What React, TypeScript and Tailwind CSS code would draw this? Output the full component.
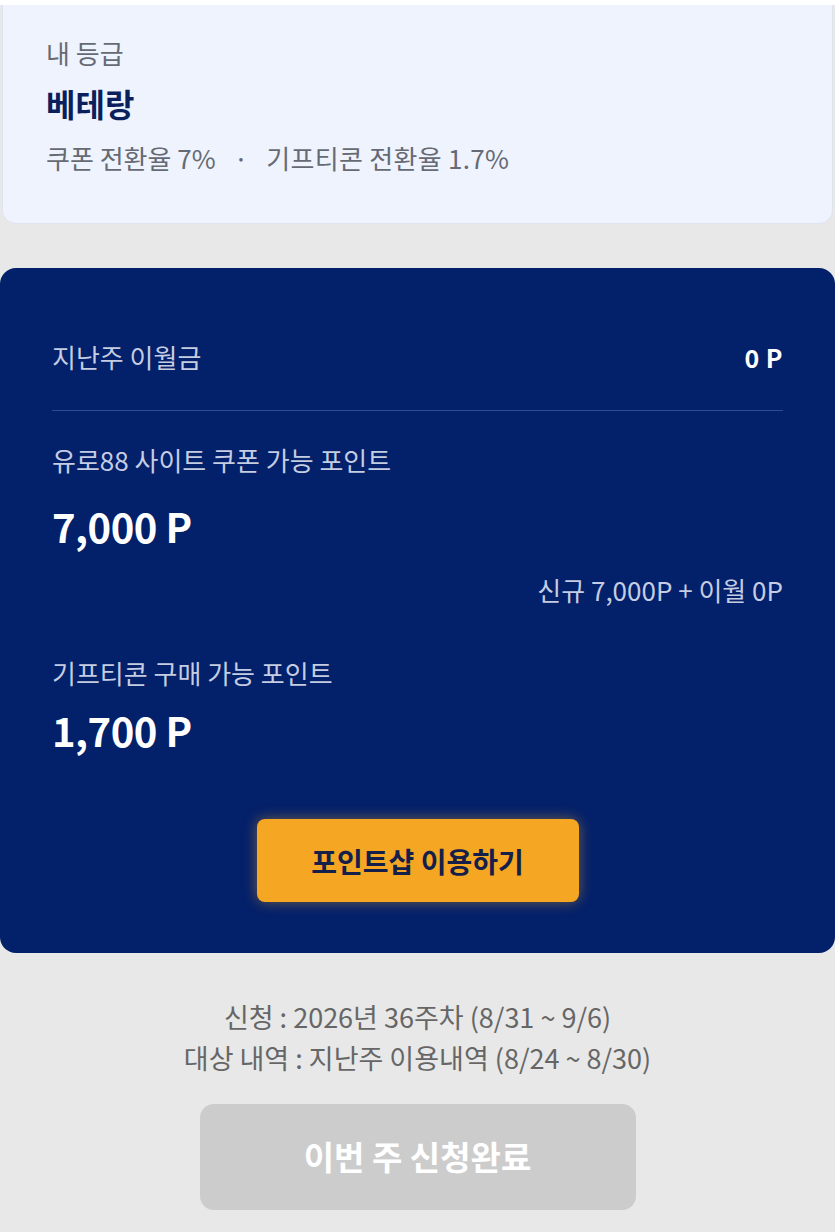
import React from "react";

export default function App() {
  const font = { fontFamily: '"Noto Sans CJK KR", "Noto Sans", sans-serif' };
  return (
    <div className="w-[835px] h-[1232px] bg-[#e8e8e8] overflow-hidden" style={font}>
      <div className="h-[5px] bg-white" />
      <div className="mx-[2px] rounded-b-[14px] bg-[#eef3fe] border border-t-0 border-[#dfe5f0] pl-[43px] pt-[30px] pb-[47px]">
        <div className="text-[26px] leading-[36px] text-[#666a73]">내 등급</div>
        <div className="mt-[14px] text-[32px] leading-[36px] font-bold text-[#0a1f5c]">베테랑</div>
        <div className="mt-[19px] text-[26px] leading-[36px] text-[#666a73] flex">
          <span>쿠폰 전환율 7%</span>
          <span className="mx-[18px]">·</span>
          <span className="tracking-[0.3px]">기프티콘 전환율 1.7%</span>
        </div>
      </div>

      <div className="mt-[44px] rounded-[16px] bg-[#03206a] px-[52px] pt-[71px] pb-[51px]">
        <div className="flex items-center justify-between">
          <span className="text-[26px] leading-[36px] text-[#c5cde3]">지난주 이월금</span>
          <span className="text-[25px] leading-[36px] font-bold text-white tracking-[0.5px]">0 P</span>
        </div>
        <div className="mt-[35px] h-px bg-[#2f4a8f]" />
        <div className="mt-[31px] text-[26px] leading-[36px] text-[#c5cde3]">유로88 사이트 쿠폰 가능 포인트</div>
        <div className="mt-[26px] text-[40px] leading-[44px] font-bold text-white tracking-[-0.5px]">7,000 P</div>
        <div className="mt-[26px] text-right text-[26px] leading-[32px] text-[#c5cde3]">신규 7,000P + 이월 0P</div>
        <div className="mt-[49px] text-[26px] leading-[36px] text-[#c5cde3]">기프티콘 구매 가능 포인트</div>
        <div className="mt-[17px] text-[40px] leading-[44px] font-bold text-white tracking-[-0.5px]">1,700 P</div>
        <div className="mt-[67px] flex justify-center">
          <button className="w-[322px] h-[83px] rounded-[8px] bg-[#f5a623] text-[28px] font-bold text-[#14204a] shadow-[0_0_14px_rgba(245,166,35,0.45)]">
            포인트샵 이용하기
          </button>
        </div>
      </div>

      <div className="mt-[43px] flex flex-col items-center text-[27px] leading-[41px] text-[#666]">
        <div>신청 : 2026년 36주차 (8/31 ~ 9/6)</div>
        <div>대상 내역 : 지난주 이용내역 (8/24 ~ 8/30)</div>
      </div>
      <div className="mt-[26px] flex justify-center">
        <button className="w-[436px] h-[106px] rounded-[14px] bg-[#cccccc] text-[33px] font-bold text-white">
          이번 주 신청완료
        </button>
      </div>
    </div>
  );
}
